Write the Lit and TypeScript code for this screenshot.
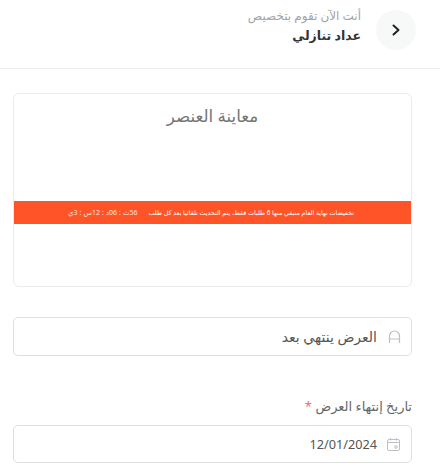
import { LitElement, html, css } from "lit";
import { customElement } from "lit/decorators.js";

@customElement("app-root")
export class AppRoot extends LitElement {
  static styles = css`
    :host { display: block; width: 440px; height: 473px; overflow: hidden; background: #fff; font-family: "Noto Sans", "DejaVu Sans", sans-serif; color: #3a3a3a; }
    .page { direction: rtl; }
    .header { height: 69px; box-sizing: border-box; border-bottom: 1px solid #ececec; display: flex; align-items: center; gap: 15px; padding: 0 24px 8px; }
    .back { width: 40px; height: 40px; border-radius: 50%; background: #f7f8f8; display: flex; align-items: center; justify-content: center; }
    .titles { display: flex; flex-direction: column; gap: 4px; padding-bottom: 8px; }
    .sub { font-size: 12px; line-height: 15px; color: #a3a3a3; }
    .title { font-size: 12.5px; line-height: 18px; font-weight: 700; color: #333; letter-spacing: -0.9px; }
    .body { padding: 24px 28px 0; display: flex; flex-direction: column; }
    .preview { width: 399px; height: 194px; box-sizing: border-box; border: 1px solid #ebebeb; border-radius: 6px; display: flex; flex-direction: column; align-items: center; }
    .preview-title { font-size: 16.7px; line-height: 24px; color: #757575; margin-top: 10px; }
    .banner { margin-top: 73px; align-self: stretch; height: 23px; background: #ff5328; color: #fff; font-size: 6.4px; display: flex; align-items: center; gap: 11px; padding: 0 57px 0 0; white-space: nowrap; }
    .timer { display: flex; gap: 2px; font-size: 7px; opacity: .85; }
    .field { width: 399px; box-sizing: border-box; border: 1px solid #dfdfdf; border-radius: 5px; display: flex; align-items: center; padding: 0 10px; color: #555; font-size: 14px; }
    .f1 { height: 39px; margin-top: 30px; gap: 11px; }
    .f2 { height: 38px; margin-top: 10px; gap: 9px; }
    .label { font-size: 13px; line-height: 18px; color: #666; margin-top: 41px; }
    .req { color: #ef6a6a; }
    .date { direction: ltr; font-size: 12.7px; color: #555; }
    svg { display: block; flex: none; }
  `;

  render() {
    return html`
      <div class="page">
        <div class="header">
          <div class="back">
            <svg width="10" height="12" viewBox="0 0 10 12" fill="none" stroke="#222" stroke-width="2" stroke-linecap="round" stroke-linejoin="round"><path d="M2.5 1.5 7.5 6l-5 4.5"/></svg>
          </div>
          <div class="titles">
            <div class="sub">أنت الآن تقوم بتخصيص</div>
            <div class="title">عداد تنازلي</div>
          </div>
        </div>
        <div class="body">
          <div class="preview">
            <div class="preview-title">معاينة العنصر</div>
            <div class="banner">
              <span>تخفيضات نهاية العام متبقي منها 6 طلبات فقط، يتم التحديث تلقائيا بعد كل طلب</span>
              <span class="timer"><span>56ث</span><span>:</span><span>06د</span><span>:</span><span>12س</span><span>:</span><span>3ي</span></span>
            </div>
          </div>
          <div class="field f1">
            <svg width="13" height="14" viewBox="0 0 13 14" fill="none" stroke="#bcbfc3" stroke-width="1.2"><path d="M1.5 13V6a5 5 0 0 1 10 0v7M1.5 9h10"/></svg>
            <span>العرض ينتهي بعد</span>
          </div>
          <div class="label">تاريخ إنتهاء العرض <span class="req">*</span></div>
          <div class="field f2">
            <svg width="15" height="15" viewBox="0 0 15 15" fill="none" stroke="#bcbfc3" stroke-width="1"><rect x="1.5" y="2.5" width="12" height="11" rx="1.5"/><path d="M1.5 5.5h12M4.5 1v2.5M10.5 1v2.5"/><circle cx="10" cy="10" r="1.3"/></svg>
            <span class="date">12/01/2024</span>
          </div>
        </div>
      </div>
    `;
  }
}
